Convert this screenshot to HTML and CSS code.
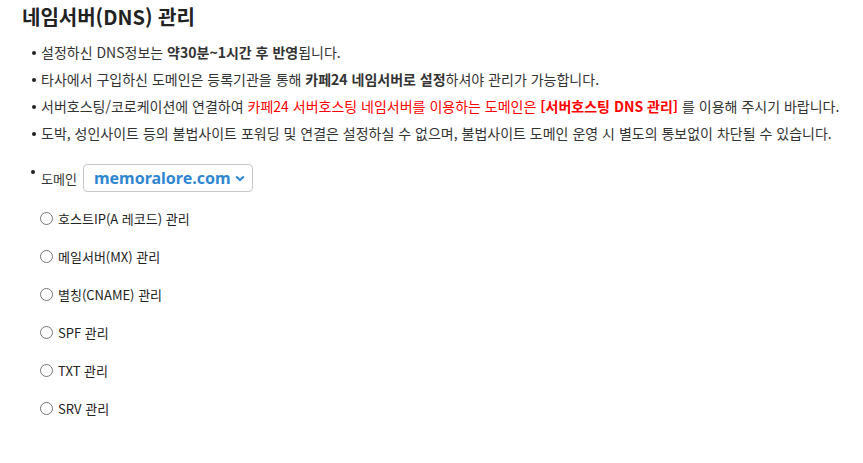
FILE: index.html
```html
<!DOCTYPE html>
<html lang="ko">
<head>
<meta charset="utf-8">
<link rel="stylesheet" href="styles.css">
</head>
<body>
<div class="page">
  <h1 class="title">네임서버(DNS) 관리</h1>
  <ul class="notes">
    <li>설정하신 DNS정보는 <b>약30분~1시간 후 반영</b>됩니다.</li>
    <li>타사에서 구입하신 도메인은 등록기관을 통해 <b>카페24 네임서버로 설정</b>하셔야 관리가 가능합니다.</li>
    <li>서버호스팅/코로케이션에 연결하여 <span class="red">카페24 서버호스팅 네임서버를 이용하는 도메인은 <b>[서버호스팅 DNS 관리]</b></span> 를 이용해 주시기 바랍니다.</li>
    <li>도박, 성인사이트 등의 불법사이트 포워딩 및 연결은 설정하실 수 없으며, 불법사이트 도메인 운영 시 별도의 통보없이 차단될 수 있습니다.</li>
  </ul>
  <div class="domain-row">
    <span class="dot"></span>
    <span class="domain-label">도메인</span>
    <div class="select">
      <span class="select-value">memoralore.com</span>
      <svg class="chev" width="10" height="7" viewBox="0 0 10 7"><path d="M1.2 1.5l3.8 3.6 3.8-3.6" fill="none" stroke="#2f86d1" stroke-width="2"/></svg>
    </div>
  </div>
  <div class="options">
    <label class="opt"><span class="radio"></span>호스트IP(A 레코드) 관리</label>
    <label class="opt"><span class="radio"></span>메일서버(MX) 관리</label>
    <label class="opt"><span class="radio"></span>별칭(CNAME) 관리</label>
    <label class="opt"><span class="radio"></span>SPF 관리</label>
    <label class="opt"><span class="radio"></span>TXT 관리</label>
    <label class="opt"><span class="radio"></span>SRV 관리</label>
  </div>
</div>
</body>
</html>
```

FILE: styles.css
```css
html, body {
  margin: 0;
  padding: 0;
  background: #fff;
}
body {
  font-family: "Noto Sans CJK KR", "Noto Sans", sans-serif;
  color: #333;
}
.page {
  padding: 3px 0 0 22px;
}
.title {
  margin: 0;
  font-size: 20px;
  font-weight: 700;
  line-height: 28px;
  color: #222;
}
.notes {
  list-style: none;
  margin: 8px 0 0 0;
  padding: 0;
}
.notes li {
  position: relative;
  font-size: 14px;
  line-height: 19px;
  padding: 4px 0 4px 19px;
}
.notes li::before {
  content: "";
  position: absolute;
  left: 10px;
  top: 12px;
  width: 4px;
  height: 4px;
  border-radius: 50%;
  background: #222;
}
.notes b {
  font-weight: 700;
}
.red {
  color: #ff0000;
}
.domain-row {
  display: flex;
  align-items: center;
  margin-top: 17px;
  height: 28px;
}
.dot {
  width: 4px;
  height: 4px;
  border-radius: 50%;
  background: #222;
  margin-left: 9px;
  margin-right: 6px;
  align-self: flex-start;
  margin-top: 6px;
}
.domain-label {
  font-size: 13px;
  margin-right: 6px;
}
.select {
  display: flex;
  align-items: center;
  justify-content: space-between;
  box-sizing: border-box;
  width: 170px;
  height: 28px;
  border: 1px solid #c8c8c8;
  border-radius: 4px;
  padding: 0 7px 0 10px;
}
.select-value {
  font-family: "Noto Sans", sans-serif;
  font-weight: 700;
  font-size: 16px;
  color: #2f86d1;
}
.options {
  display: flex;
  flex-direction: column;
  margin-top: 7px;
  padding-left: 18px;
}
.opt {
  display: flex;
  align-items: center;
  height: 38px;
  font-size: 13px;
  color: #222;
}
.radio {
  width: 11px;
  height: 11px;
  border: 1px solid #767676;
  border-radius: 50%;
  margin-right: 5px;
}
```
